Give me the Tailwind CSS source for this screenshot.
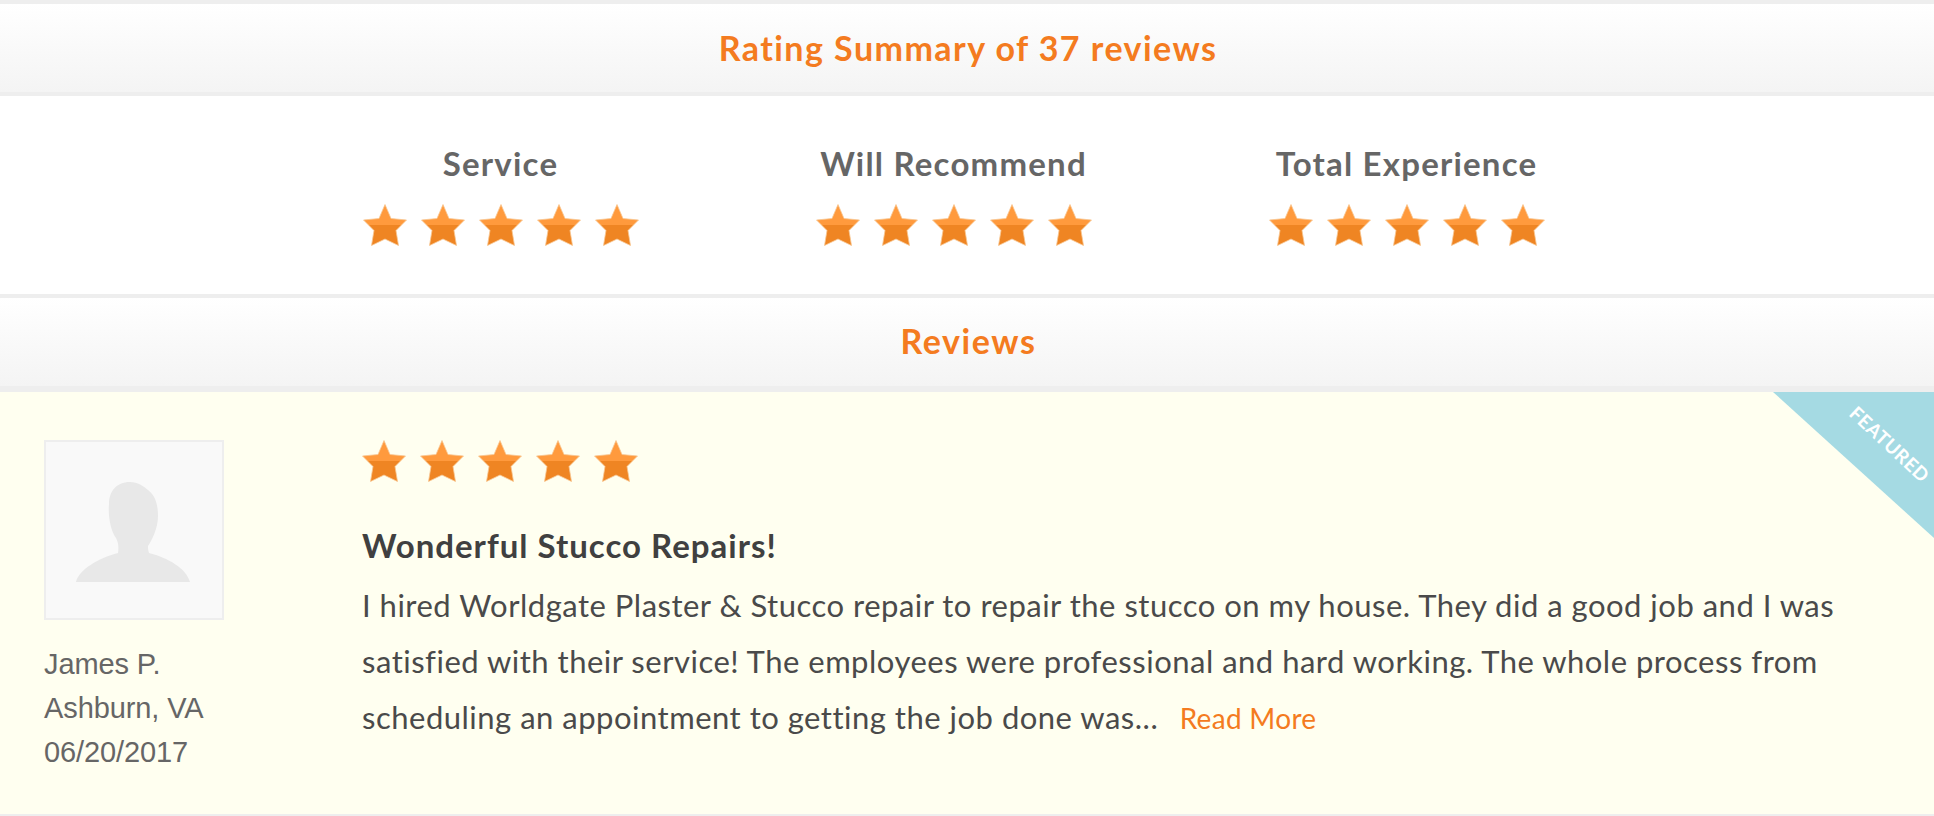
<!DOCTYPE html>
<html lang="en">
<head>
  <meta charset="UTF-8">
  <title>Rating Summary</title>
  <script src="https://cdn.jsdelivr.net/npm/@tailwindcss/browser@4"></script>
</head>
<body class="bg-white font-['Lato',sans-serif] overflow-hidden">

  <!-- star used everywhere -->
  <svg class="absolute w-0 h-0">
    <defs>
      <linearGradient id="starFill" x1="0" y1="0" x2="0" y2="1">
        <stop offset="0.5" stop-color="#ff9a3d"/>
        <stop offset="0.5" stop-color="#ef8523"/>
      </linearGradient>
      <symbol id="star" viewBox="0 0 44 42">
        <path d="M22 0.5 L28 14.5 L43.5 16 L33 26.5 L35.5 41.5 L22 35 L8.5 41.5 L11 26.5 L0.5 16 L16 14.5 Z" fill="url(#starFill)" stroke="#f8c692" stroke-width="0.8" stroke-linejoin="round"/>
      </symbol>
    </defs>
  </svg>

  <div class="h-[96px] border-y-4 border-[#eeeeee] bg-gradient-to-b from-white to-[#f4f4f4] flex items-center justify-center pb-[2px] pl-[2px]">
    <h2 class="text-[34px] tracking-[1.45px] font-bold text-[#f47b20]">Rating Summary of 37 reviews</h2>
  </div>

  <div class="h-[198px] pl-[274px] flex">
    <div class="w-[453px] pt-[49px] flex flex-col items-center">
      <div class="text-[33px] tracking-[1.2px] leading-[36px] font-bold text-[#666666] mb-[23px]">Service</div>
      <div class="flex gap-[14px] blur-[0.4px]">
        <svg class="w-[44px] h-[42px]"><use href="#star"/></svg>
        <svg class="w-[44px] h-[42px]"><use href="#star"/></svg>
        <svg class="w-[44px] h-[42px]"><use href="#star"/></svg>
        <svg class="w-[44px] h-[42px]"><use href="#star"/></svg>
        <svg class="w-[44px] h-[42px]"><use href="#star"/></svg>
      </div>
    </div>
    <div class="w-[453px] pt-[49px] flex flex-col items-center">
      <div class="text-[33px] tracking-[1.2px] leading-[36px] font-bold text-[#666666] mb-[23px]">Will Recommend</div>
      <div class="flex gap-[14px] blur-[0.4px]">
        <svg class="w-[44px] h-[42px]"><use href="#star"/></svg>
        <svg class="w-[44px] h-[42px]"><use href="#star"/></svg>
        <svg class="w-[44px] h-[42px]"><use href="#star"/></svg>
        <svg class="w-[44px] h-[42px]"><use href="#star"/></svg>
        <svg class="w-[44px] h-[42px]"><use href="#star"/></svg>
      </div>
    </div>
    <div class="w-[453px] pt-[49px] flex flex-col items-center">
      <div class="text-[33px] tracking-[1.2px] leading-[36px] font-bold text-[#666666] mb-[23px]">Total Experience</div>
      <div class="flex gap-[14px] blur-[0.4px]">
        <svg class="w-[44px] h-[42px]"><use href="#star"/></svg>
        <svg class="w-[44px] h-[42px]"><use href="#star"/></svg>
        <svg class="w-[44px] h-[42px]"><use href="#star"/></svg>
        <svg class="w-[44px] h-[42px]"><use href="#star"/></svg>
        <svg class="w-[44px] h-[42px]"><use href="#star"/></svg>
      </div>
    </div>
  </div>

  <div class="h-[98px] border-t-4 border-b-[6px] border-[#eeeeee] bg-gradient-to-b from-white to-[#f4f4f4] flex items-center justify-center pb-[3px] pl-[3px]">
    <h2 class="text-[34px] tracking-[1.6px] font-bold text-[#f47b20]">Reviews</h2>
  </div>

  <div class="relative h-[424px] border-b-2 border-[#eeeeee] bg-[#fffff0] overflow-hidden flex pl-[44px] pt-[48px]">
    <div class="w-[318px] shrink-0">
      <div class="w-[180px] h-[180px] border-2 border-[#eeeeee] bg-[#f9f9f9] flex items-center justify-center">
        <svg class="w-[176px] h-[176px]" viewBox="0 0 176 176">
          <path d="M30 140 C33 128 52 116 72 111 C73 104 72 100 70 96 C64 88 62 72 63 62 C63 50 70 40 84 40 C92 40 97 44 102 48 C110 54 112 64 112 74 C112 86 106 98 102 104 C102 106 102 108 103 111 C122 116 140 126 144 140 Z" fill="#e8e8e8"/>
        </svg>
      </div>
      <div class="mt-[22px] font-['Liberation_Sans',sans-serif] text-[29px] leading-[44px] tracking-[-0.1px] text-[#666666]">
        <div>James P.</div>
        <div>Ashburn, VA</div>
        <div>06/20/2017</div>
      </div>
    </div>
    <div class="w-[1500px]">
      <div class="flex gap-[14px] blur-[0.4px]">
        <svg class="w-[44px] h-[42px]"><use href="#star"/></svg>
        <svg class="w-[44px] h-[42px]"><use href="#star"/></svg>
        <svg class="w-[44px] h-[42px]"><use href="#star"/></svg>
        <svg class="w-[44px] h-[42px]"><use href="#star"/></svg>
        <svg class="w-[44px] h-[42px]"><use href="#star"/></svg>
      </div>
      <h3 class="mt-[41px] text-[33px] tracking-[1px] leading-[44px] font-bold text-[#404040]">Wonderful Stucco Repairs!</h3>
      <p class="mt-[10px] text-[31px] tracking-[0.5px] leading-[56px] text-[#4a4a4a]">I hired Worldgate Plaster &amp; Stucco repair to repair the stucco on my house. They did a good job and I was<br>satisfied with their service! The employees were professional and hard working. The whole process from<br>scheduling an appointment to getting the job done was... <a class="ml-[13px] text-[28px] tracking-[0.3px] text-[#f47b20]">Read More</a></p>
    </div>

    <!-- featured corner ribbon -->
    <svg class="absolute top-0 right-0 w-[161px] h-[146px]" viewBox="0 0 161 146">
      <polygon points="0,0 161,0 161,146" fill="#a5dae3"/>
      <text x="116" y="59" text-anchor="middle" transform="rotate(43 116 53)" class="text-[19px] tracking-[0.5px] font-bold fill-white">FEATURED</text>
    </svg>
  </div>

</body>
</html>
